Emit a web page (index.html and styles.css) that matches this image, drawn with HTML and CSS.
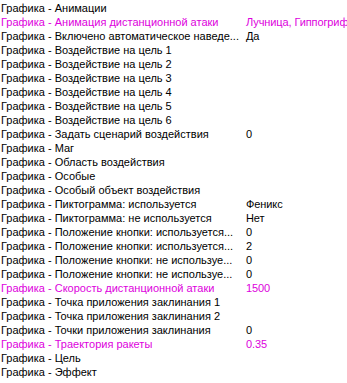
FILE: index.html
```html
<!DOCTYPE html>
<html lang="ru">
<head>
<meta charset="utf-8">
<title>Свойства</title>
<link rel="stylesheet" href="styles.css">
</head>
<body>
<div class="list">
  <div class="row"><span class="name">Графика - Анимации</span><span class="val"></span></div>
  <div class="row mod"><span class="name">Графика - Анимация дистанционной атаки</span><span class="val">Лучница, Гиппогриф</span></div>
  <div class="row"><span class="name">Графика - Включено автоматическое наведе...</span><span class="val">Да</span></div>
  <div class="row"><span class="name">Графика - Воздействие на цель 1</span><span class="val"></span></div>
  <div class="row"><span class="name">Графика - Воздействие на цель 2</span><span class="val"></span></div>
  <div class="row"><span class="name">Графика - Воздействие на цель 3</span><span class="val"></span></div>
  <div class="row"><span class="name">Графика - Воздействие на цель 4</span><span class="val"></span></div>
  <div class="row"><span class="name">Графика - Воздействие на цель 5</span><span class="val"></span></div>
  <div class="row"><span class="name">Графика - Воздействие на цель 6</span><span class="val"></span></div>
  <div class="row"><span class="name">Графика - Задать сценарий воздействия</span><span class="val">0</span></div>
  <div class="row"><span class="name">Графика - Маг</span><span class="val"></span></div>
  <div class="row"><span class="name">Графика - Область воздействия</span><span class="val"></span></div>
  <div class="row"><span class="name">Графика - Особые</span><span class="val"></span></div>
  <div class="row"><span class="name">Графика - Особый объект воздействия</span><span class="val"></span></div>
  <div class="row"><span class="name">Графика - Пиктограмма: используется</span><span class="val">Феникс</span></div>
  <div class="row"><span class="name">Графика - Пиктограмма: не используется</span><span class="val">Нет</span></div>
  <div class="row"><span class="name">Графика - Положение кнопки: используется...</span><span class="val">0</span></div>
  <div class="row"><span class="name">Графика - Положение кнопки: используется...</span><span class="val">2</span></div>
  <div class="row"><span class="name">Графика - Положение кнопки: не используе...</span><span class="val">0</span></div>
  <div class="row"><span class="name">Графика - Положение кнопки: не используе...</span><span class="val">0</span></div>
  <div class="row mod"><span class="name">Графика - Скорость дистанционной атаки</span><span class="val">1500</span></div>
  <div class="row"><span class="name">Графика - Точка приложения заклинания 1</span><span class="val"></span></div>
  <div class="row"><span class="name">Графика - Точка приложения заклинания 2</span><span class="val"></span></div>
  <div class="row"><span class="name">Графика - Точки приложения заклинания</span><span class="val">0</span></div>
  <div class="row mod"><span class="name">Графика - Траектория ракеты</span><span class="val">0.35</span></div>
  <div class="row"><span class="name">Графика - Цель</span><span class="val"></span></div>
  <div class="row"><span class="name">Графика - Эффект</span><span class="val"></span></div>
</div>
</body>
</html>
```
FILE: styles.css
```css
html, body {
  margin: 0;
  padding: 0;
  background: #ffffff;
}
body {
  font-family: "Liberation Sans", Arial, sans-serif;
  font-size: 11px;
  color: #000000;
}
.list {
  display: flex;
  flex-direction: column;
  padding: 1px 0 0 1px;
}
.row {
  display: grid;
  grid-template-columns: 245px 1fr;
  height: 14px;
  line-height: 14px;
  white-space: nowrap;
}
.name {
  overflow: hidden;
}
.val {
  letter-spacing: -0.1px;
}
.mod {
  color: #dd00dd;
}
```
